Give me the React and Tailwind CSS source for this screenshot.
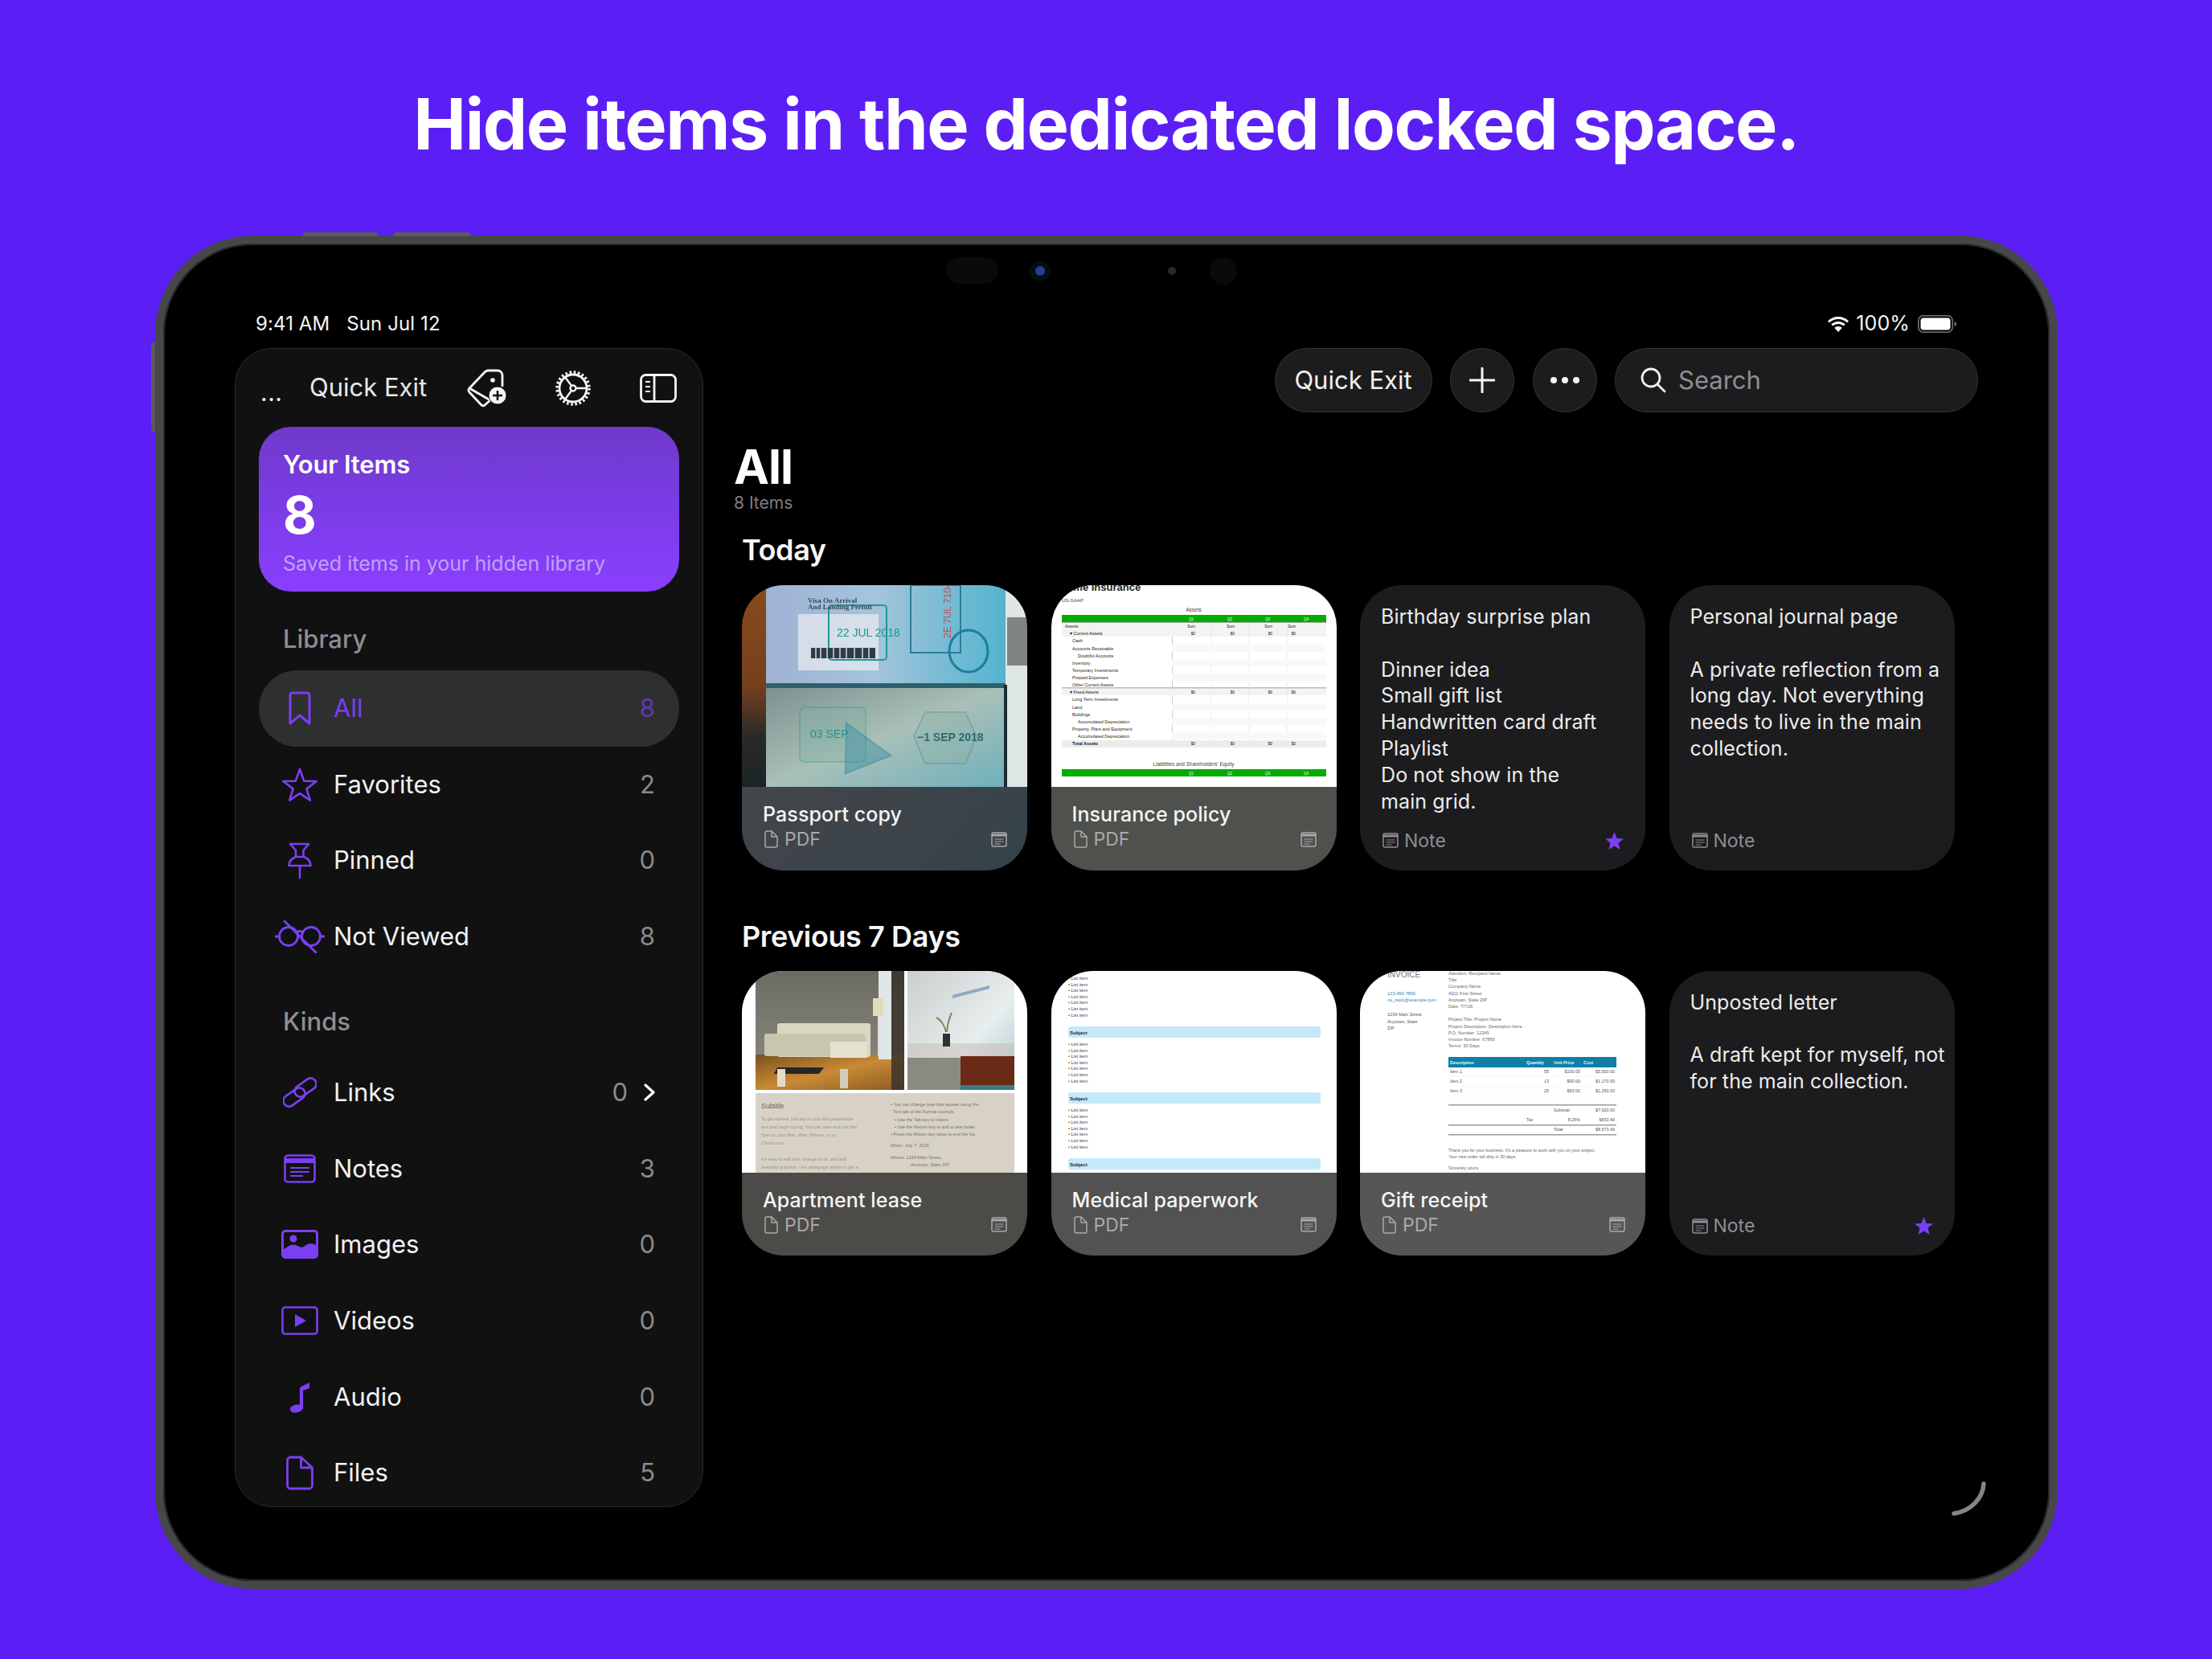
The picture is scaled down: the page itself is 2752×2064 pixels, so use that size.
import React from "react";

const PURPLE = "#7b3ff2";

const I = {
  bookmark: (
    <svg width="28" height="43" viewBox="0 0 28 43" fill="none" stroke={PURPLE} strokeWidth="3" strokeLinejoin="round">
      <path d="M2 5a3 3 0 0 1 3-3h18a3 3 0 0 1 3 3v35l-12-10L2 40Z" />
    </svg>
  ),
  star: (
    <svg width="44" height="42" viewBox="0 0 44 42" fill="none" stroke={PURPLE} strokeWidth="2.6" strokeLinejoin="round">
      <path d="M22 2l5.2 14.6L42.6 17 30.4 26.4 34.8 40.6 22 32.2 9.2 40.6l4.4-14.2L1.4 17l15.4-.4Z" />
    </svg>
  ),
  pin: (
    <svg width="30" height="46" viewBox="0 0 30 46" fill="none" stroke={PURPLE} strokeWidth="2.6" strokeLinecap="round" strokeLinejoin="round">
      <path d="M3 2h23l-6.5 8v8H10v-8Z" />
      <path d="M10 18C5 20 1.5 24 1.5 29h27C28.500 24 25 20 20 18" />
      <path d="M15 29v15" />
    </svg>
  ),
  notViewed: (
    <svg width="62" height="41" viewBox="0 0 62 41" fill="none" stroke={PURPLE} strokeWidth="2.8" strokeLinecap="round">
      <circle cx="17" cy="20" r="11.500" />
      <circle cx="45" cy="20" r="11.500" />
      <path d="M1 20h5M56 20h5M12 1l39 39" />
      <path d="M27 15c2-2 6-2 8 0" />
    </svg>
  ),
  link: (
    <svg width="42" height="42" viewBox="0 0 42 42" fill="none" stroke={PURPLE} strokeWidth="2.6">
      <rect x="-15" y="-7" width="30" height="14" rx="7" transform="translate(14 27) rotate(-35)" />
      <rect x="-15" y="-7" width="30" height="14" rx="7" transform="translate(28 15) rotate(-35)" />
    </svg>
  ),
  notes: (
    <svg width="40" height="36" viewBox="0 0 40 36" fill="none" stroke={PURPLE} strokeWidth="2.6">
      <rect x="1.500" y="1.500" width="37" height="33" rx="4" />
      <path d="M2 8h36" strokeWidth="6" />
      <path d="M8 17h24M8 22h24M8 27h16" strokeWidth="2" />
    </svg>
  ),
  images: (
    <svg width="46" height="36" viewBox="0 0 46 36" fill="none">
      <rect x="1.500" y="1.500" width="43" height="33" rx="3.500" stroke={PURPLE} strokeWidth="3" />
      <circle cx="15" cy="11" r="4.500" fill={PURPLE} />
      <path d="M2 33v-8c6-4 10-8 16-6 5 2 7 4 10 2 5-4 10-6 16-1v13Z" fill={PURPLE} />
    </svg>
  ),
  videos: (
    <svg width="46" height="36" viewBox="0 0 46 36" fill="none">
      <rect x="1.500" y="1.500" width="43" height="33" rx="3.500" stroke={PURPLE} strokeWidth="2.600" />
      <path d="M17 10l14 8-14 8Z" fill={PURPLE} />
    </svg>
  ),
  audio: (
    <svg width="25" height="40" viewBox="0 0 25 40" fill="none">
      <path d="M13 7.500 24 2v7l-8 3v21c0 4-5 6.500-10 6.500C2 39.500 0 37.500 0 35c0-3.500 5-5.500 10-5.500l2 .3V9Z" fill={PURPLE} />
    </svg>
  ),
  file: (
    <svg width="34" height="43" viewBox="0 0 34 43" fill="none" stroke={PURPLE} strokeWidth="2.800" strokeLinejoin="round">
      <path d="M1.500 6a4 4 0 0 1 4-4h13L32.500 15v22a4 4 0 0 1-4 4h-23a4 4 0 0 1-4-4Z" />
      <path d="M18.500 2v13h14" />
    </svg>
  ),
};

const PdfGlyph = () => (
  <svg width="17" height="22" viewBox="0 0 17 22" fill="none" stroke="#a9a9a9" strokeWidth="1.500" strokeLinejoin="round">
    <path d="M1 3a2 2 0 0 1 2-2h6l7 7v11a2 2 0 0 1-2 2H3a2 2 0 0 1-2-2Z" />
    <path d="M9 1v7h7" />
  </svg>
);

const NoteGlyph = ({ c = "#a9a9a9" }) => (
  <svg width="20" height="19" viewBox="0 0 20 19" fill="none" stroke={c} strokeWidth="1.500">
    <rect x="1" y="1" width="18" height="17" rx="2" />
    <path d="M1 4h18" strokeWidth="3" />
    <path d="M4.500 9h11M4.500 12h11M4.500 15h7" strokeWidth="1.200" />
  </svg>
);

const Star = () => (
  <svg width="23" height="22" viewBox="0 0 23 22" fill={PURPLE}>
    <path d="M11.500 0l3.100 7.900 8.400.5-6.500 5.300 2.100 8.300-7.100-4.600L4.400 22l2.100-8.300L0 8.400l8.400-.5Z" />
  </svg>
);

/* thumbnails */
const Passport = () => (
  <svg className="block w-full h-full" viewBox="0 0 355 251" preserveAspectRatio="none" fontFamily="Liberation Serif, serif">
    <defs>
      <linearGradient id="wood" x1="0" y1="0" x2="0" y2="1">
        <stop offset="0" stopColor="#8a4a1e" />
        <stop offset=".5" stopColor="#74401e" />
        <stop offset=".75" stopColor="#2a2a28" />
        <stop offset="1" stopColor="#1c2426" />
      </linearGradient>
      <linearGradient id="up" x1="0" y1="0" x2="1" y2="0">
        <stop offset="0" stopColor="#9fb2d4" />
        <stop offset=".45" stopColor="#a4c4dc" />
        <stop offset="1" stopColor="#52b4cd" />
      </linearGradient>
      <linearGradient id="low" x1="0" y1="0" x2="1" y2="1">
        <stop offset="0" stopColor="#7a908e" />
        <stop offset=".5" stopColor="#a9c0b8" />
        <stop offset="1" stopColor="#6fb0bc" />
      </linearGradient>
      <filter id="bl"><feGaussianBlur stdDeviation=".6" /></filter>
    </defs>
    <g filter="url(#bl)">
      <rect width="355" height="251" fill="#1b2a30" />
      <rect width="32" height="251" fill="url(#wood)" />
      <rect x="30" width="300" height="126" fill="url(#up)" />
      <rect x="30" y="124" width="298" height="127" fill="url(#low)" />
      <rect x="328" width="27" height="251" fill="#dfe6e6" />
      <rect x="330" y="40" width="25" height="60" fill="#333" opacity=".55" />
      <rect x="30" y="122" width="298" height="6" fill="#2f5e6c" />
      <rect x="326" y="124" width="4" height="127" fill="#1e2b30" />
      <rect x="70" y="36" width="100" height="70" fill="#e4e6ee" opacity=".8" />
      <rect x="108" y="25" width="72" height="68" rx="4" fill="none" stroke="#1d9a90" strokeWidth="2" />
      <text x="82" y="22" fontSize="9" fill="#3a4a58" fontWeight="700">Visa On Arrival</text>
      <text x="82" y="30" fontSize="9" fill="#3a4a58" fontWeight="700">And Landing Permit</text>
      <text x="118" y="64" fontSize="14" fill="#149a8c" fontFamily="Liberation Sans, sans-serif">22 JUL 2018</text>
      <rect x="86" y="78" width="80" height="13" fill="#2f3c44" />
      <path d="M92 78v13M98 78v13M106 78v13M114 78v13M122 78v13M130 78v13M140 78v13M150 78v13M158 78v13" stroke="#cfd8e0" strokeWidth="1.500" />
      <rect x="210" y="0" width="62" height="84" fill="none" stroke="#2a7c9c" strokeWidth="2" />
      <text x="214" y="60" fontSize="12" fill="#c84a52" transform="rotate(-90 240 40)" fontFamily="Liberation Sans, sans-serif">2E 7UL 7104</text>
      <ellipse cx="282" cy="82" rx="24" ry="26" fill="none" stroke="#1a7ea0" strokeWidth="3" />
      <rect x="72" y="152" width="82" height="68" rx="6" fill="#7fb2a4" opacity=".35" stroke="#2d9a90" strokeWidth="2" />
      <text x="85" y="190" fontSize="14" fill="#22948a" fontFamily="Liberation Sans, sans-serif">03 SEP</text>
      <path d="M130 172l55 40-56 22Z" fill="#3b8ea4" opacity=".45" stroke="#1e7f9a" strokeWidth="2.500" />
      <path d="M228 158h50l14 30-14 34h-50l-14-34Z" fill="#8fb3a8" opacity=".4" stroke="#4d7a7c" strokeWidth="1.500" />
      <text x="218" y="194" fontSize="14" fill="#2f6870" fontFamily="Liberation Sans, sans-serif" fontWeight="700">−1 SEP 2018</text>
    </g>
  </svg>
);

const Insurance = () => {
  const rows = [
    [69, "Cash", 26], [79, "Accounts Receivable", 26], [88, "Doubtful Accounts", 33], [97, "Inventory", 26],
    [106, "Temporary Investments", 26], [115, "Prepaid Expenses", 26], [124, "Other Current Assets", 26],
    [142, "Long Term Investments", 26], [152, "Land", 26], [161, "Buildings", 26], [170, "Accumulated Depreciation", 33],
    [179, "Property, Plant and Equipment", 26], [188, "Accumulated Depreciation", 33],
  ];
  const cols = [160, 209, 256, 303, 340];
  return (
    <svg className="block w-full h-full" viewBox="0 0 355 251" preserveAspectRatio="none" fontFamily="Liberation Sans, sans-serif">
      <rect width="355" height="251" fill="#fff" />
      <text x="10" y="7" fontSize="13" fontWeight="700" fill="#222">Home Insurance</text>
      <text x="13" y="21" fontSize="6" fill="#444">US-GAAP</text>
      <text x="177" y="33" fontSize="6.500" fill="#444" textAnchor="middle">Assets</text>
      <rect x="13" y="37" width="329" height="9" fill="#00ad00" />
      <rect x="13" y="46" width="329" height="1" fill="#aaa" />
      <rect x="13" y="47" width="329" height="17" fill="#f3f3f3" />
      <text x="17" y="53" fontSize="5.500" fill="#222">Assets</text>
      <text x="23" y="62" fontSize="5.500" fill="#111">▾ Current Assets</text>
      <rect x="13" y="128" width="329" height="9" fill="#f3f3f3" />
      <rect x="13" y="127" width="329" height="1.500" fill="#bbb" />
      <text x="23" y="135" fontSize="5.500" fill="#111">▾ Fixed Assets</text>
      <rect x="13" y="193" width="329" height="9" fill="#ececec" />
      <text x="26" y="199" fontSize="5.500" fontWeight="700" fill="#111">Total Assets</text>
      {rows.map(([y, t, x]) => (
        <text key={y} x={x} y={y + 2} fontSize="5.500" fill="#222">{t}</text>
      ))}
      {[64, 137].map((y0) => (
        <rect key={y0} x="150" y={y0} width="1" height={y0 === 64 ? 63 : 56} fill="#ccc" />
      ))}
      {[198, 245, 293].map((x) => <rect key={x} x={x} y="47" width=".6" height="155" fill="#e6e6e6" />)}
      {[74, 92, 110, 147, 165, 183].map((y) => <rect key={y} x="150" y={y} width="192" height="9" fill="#f8f8f8" />)}
      {[53, 62, 135, 199].map((y) =>
        cols.slice(0, 4).map((x, i) => (
          <text key={y + "" + i} x={x + 19 + (i === 3 ? -18 : 0)} y={y} fontSize="4.800" fill="#111" textAnchor="end">{y === 53 ? "Sum" : "$0"}</text>
        ))
      )}
      <text x="177" y="225" fontSize="6.500" fill="#444" textAnchor="middle">Liabilities and Shareholders' Equity</text>
      <rect x="13" y="229" width="329" height="9" fill="#00ad00" />
      {[["Q1", 174], ["Q2", 222], ["Q3", 269], ["Q4", 317]].map(([q, x]) => (
        <g key={q}>
          <text x={x} y="44" fontSize="4.500" fill="#fff" textAnchor="middle">{q}</text>
          <text x={x} y="236" fontSize="4.500" fill="#fff" textAnchor="middle">{q}</text>
        </g>
      ))}
    </svg>
  );
};

const Apartment = () => {
  const L = [
    "To get started, just tap or click this placeholder", "text and begin typing. You can view and edit this",
    "flyer on your Mac, iPad, iPhone, or on", "iCloud.com.", "", "It's easy to edit text, change fonts, and add",
    "beautiful graphics. Use paragraph styles to get a", "consistent look throughout your document. For",
  ];
  const R = [
    "• You can change how lists appear using the", "  Text tab of the Format controls.", "   • Use the Tab key to indent.",
    "   • Use the Return key to add a new bullet.", "• Press the Return key twice to end the list.",
  ];
  return (
    <svg className="block w-full h-full" viewBox="0 0 355 251" preserveAspectRatio="none" fontFamily="Liberation Sans, sans-serif">
      <defs>
        <linearGradient id="wall" x1="0" y1="0" x2="0" y2="1"><stop offset="0" stopColor="#6b6b63" /><stop offset="1" stopColor="#8f8d83" /></linearGradient>
        <linearGradient id="floor" x1="0" y1="0" x2="1" y2="1"><stop offset="0" stopColor="#7a5020" /><stop offset=".5" stopColor="#c88a34" /><stop offset="1" stopColor="#8a5a24" /></linearGradient>
        <linearGradient id="bath" x1="0" y1="0" x2="1" y2="1"><stop offset="0" stopColor="#c8cfcc" /><stop offset=".6" stopColor="#e8eeee" /><stop offset="1" stopColor="#a8c8d0" /></linearGradient>
        <filter id="b2"><feGaussianBlur stdDeviation=".5" /></filter>
      </defs>
      <rect width="355" height="251" fill="#fff" />
      <g filter="url(#b2)">
        <rect x="17" width="185" height="148" fill="url(#wall)" />
        <rect x="17" y="104" width="185" height="44" fill="url(#floor)" />
        <rect x="170" width="16" height="110" fill="#dfe6e6" />
        <rect x="186" width="16" height="148" fill="#39322a" opacity=".85" />
        <rect x="44" y="65" width="116" height="42" rx="3" fill="#d9d6c2" />
        <rect x="28" y="78" width="126" height="28" rx="3" fill="#c9c6b0" />
        <rect x="110" y="88" width="46" height="20" fill="#e6e2d0" />
        <path d="M44 120h58l-6 8H40Z" fill="#26282a" />
        <rect x="44" y="122" width="10" height="22" fill="#e2dcc8" />
        <rect x="122" y="122" width="10" height="24" fill="#d2ccba" />
        <rect x="163" y="34" width="13" height="22" fill="#e2dcbc" />
        <rect x="169" y="56" width="1.500" height="50" fill="#ddd" />
        <rect x="206" width="133" height="148" fill="url(#bath)" />
        <rect x="206" y="90" width="133" height="58" fill="#c9bdb8" opacity=".55" />
        <rect x="206" y="108" width="66" height="40" fill="#8b8a82" />
        <rect x="272" y="106" width="67" height="36" fill="#6a2c14" />
        <rect x="272" y="142" width="67" height="6" fill="#3a7a84" />
        <path d="M262 30l46-12v4l-46 12Z" fill="#8ea8c4" />
        <rect x="250" y="78" width="9" height="16" fill="#333" />
        <path d="M254 76c-2-10-8-16-12-18M255 76c1-12 3-18 6-24" stroke="#7a8a5a" strokeWidth="2" fill="none" />
      </g>
      <rect x="17" y="152" width="322" height="99" fill="#d8d2c6" />
      <text x="24" y="171" fontSize="8.500" fill="#6a665c">Subtitle</text>
      {L.map((t, i) => (
        <text key={i} x="24" y={186 + i * 10} fontSize="5.600" fill="#9a958a">{t}</text>
      ))}
      {R.map((t, i) => (
        <text key={i} x="185" y={168 + i * 9.300} fontSize="5.600" fill="#77736a" xmlSpace="preserve">{t}</text>
      ))}
      <text x="185" y="219" fontSize="5.600" fill="#77736a">When:   July 7, 2026</text>
      <text x="185" y="234" fontSize="5.600" fill="#77736a">Where:  1234 Main Street,</text>
      <text x="210" y="243" fontSize="5.600" fill="#77736a">Anytown, State ZIP</text>
    </svg>
  );
};

const Medical = () => {
  const groups = [9, 91, 173];
  const bars = [69, 151, 233];
  return (
    <svg className="block w-full h-full" viewBox="0 0 355 251" preserveAspectRatio="none" fontFamily="Liberation Sans, sans-serif">
      <rect width="355" height="251" fill="#fff" />
      {groups.map((g) =>
        [0, 1, 2, 3, 4, 5, 6].map((i) => (
          <text key={g + "-" + i} x="21" y={g + i * 7.600 + 2} fontSize="5.600" fill="#444">• List item</text>
        ))
      )}
      {bars.map((y) => (
        <g key={y}>
          <rect x="21" y={y} width="314" height="14" rx="3" fill="#c5e9fb" />
          <text x="23" y={y + 9.500} fontSize="6" fontWeight="700" fill="#222">Subject</text>
        </g>
      ))}
    </svg>
  );
};

const Gift = () => {
  const left = [["123-456-7890", 28, "#2a85b0"], ["no_reply@example.com", 36, "#2a85b0"], ["1234 Main Street", 54, "#555"], ["Anytown, State", 63, "#555"], ["ZIP", 71, "#555"]];
  const mid = ["Attention: Recipient Name", "Title", "Company Name", "4321 First Street", "Anytown, State ZIP", "Date: 7/7/26", "", "Project Title: Project Name", "Project Description: Description Here", "P.O. Number: 12345", "Invoice Number: 67890", "Terms: 30 Days"];
  const rows = [["Item 1", "55", "$100.00", "$5,500.00", 127], ["Item 2", "13", "$90.00", "$1,170.00", 139], ["Item 3", "25", "$50.00", "$1,250.00", 151]];
  return (
    <svg className="block w-full h-full" viewBox="0 0 355 251" preserveAspectRatio="none" fontFamily="Liberation Sans, sans-serif">
      <rect width="355" height="251" fill="#fff" />
      <text x="34" y="8" fontSize="10" fill="#777">INVOICE</text>
      {left.map(([t, y, c]) => <text key={t} x="34" y={y + 2} fontSize="5.600" fill={c}>{t}</text>)}
      {mid.map((t, i) => <text key={i} x="110" y={5 + i * 8.200} fontSize="5.600" fill="#666">{t}</text>)}
      <rect x="110" y="107" width="209" height="13" fill="#0f7fa8" />
      {[["Description", 112], ["Quantity", 207], ["Unit Price", 241], ["Cost", 278]].map(([t, x]) => (
        <text key={t} x={x} y="116" fontSize="5.400" fontWeight="700" fill="#dff">{t}</text>
      ))}
      {rows.map(([a, b, c, d, y]) => (
        <g key={a} fontSize="5.400" fill="#555">
          <text x="112" y={y}>{a}</text>
          <text x="235" y={y} textAnchor="end">{b}</text>
          <text x="274" y={y} textAnchor="end">{c}</text>
          <text x="317" y={y} textAnchor="end">{d}</text>
          <rect x="110" y={y + 4} width="209" height=".5" fill="#eee" />
        </g>
      ))}
      {[166, 191, 203].map((y) => <rect key={y} x="110" y={y} width="209" height="1.500" fill="#999" />)}
      <text x="241" y="175" fontSize="5.400" fill="#555">Subtotal</text>
      <text x="317" y="175" fontSize="5.400" fill="#555" textAnchor="end">$7,920.00</text>
      <text x="207" y="187" fontSize="5.400" fill="#555">Tax</text>
      <text x="274" y="187" fontSize="5.400" fill="#555" textAnchor="end">8.25%</text>
      <text x="317" y="187" fontSize="5.400" fill="#555" textAnchor="end">$653.40</text>
      <text x="241" y="199" fontSize="5.400" fill="#555">Total</text>
      <text x="317" y="199" fontSize="5.400" fill="#555" textAnchor="end">$8,573.40</text>
      <text x="110" y="225" fontSize="5.400" fill="#666">Thank you for your business. It's a pleasure to work with you on your project.</text>
      <text x="110" y="233" fontSize="5.400" fill="#666">Your next order will ship in 30 days.</text>
      <text x="110" y="247" fontSize="5.400" fill="#666">Sincerely yours,</text>
    </svg>
  );
};

const DocCard = ({ title, thumb, footer }) => (
  <div className="h-[354.5px] rounded-[52px] overflow-hidden flex flex-col">
    <div className="h-[251px] shrink-0 overflow-hidden">{thumb}</div>
    <div className="flex-1 pt-[19px] pl-[26px] pr-[25px]" style={{ background: footer }}>
      <div className="text-[25px] leading-[30px] font-medium tracking-[0.1px] text-[#f5f5f5] whitespace-nowrap">{title}</div>
      <div className="flex items-center h-[30px] mt-px">
        <span className="ml-[2px] mr-[8px] flex"><PdfGlyph /></span>
        <span className="text-[23px] text-[#a9a9a9] leading-[30px]">PDF</span>
        <span className="ml-auto flex"><NoteGlyph /></span>
      </div>
    </div>
  </div>
);

const NoteCard = ({ lines, star }) => (
  <div className="h-[354.5px] rounded-[52px] bg-[#1c1c1e] pt-[23px] pb-[22px] pl-[26px] pr-[27px] flex flex-col justify-between">
    <div className="text-[25px] leading-[32.8px] text-[#ececec] tracking-[0.1px]">
      {lines.map((l, i) => <div key={i} className="whitespace-nowrap h-[32.8px]">{l}</div>)}
    </div>
    <div className="flex items-center h-[30px]">
      <span className="ml-[2px] mr-[7px] flex"><NoteGlyph c="#8e8e93" /></span>
      <span className="text-[23px] text-[#8e8e93] leading-[30px]">Note</span>
      {star && <span className="ml-auto flex"><Star /></span>}
    </div>
  </div>
);

const Row = ({ icon, label, count, active, chevron }) => (
  <div className={`h-[94.7px] shrink-0 flex items-center rounded-full pr-[30px] ${active ? "bg-[#2e2f2f]" : ""}`}>
    <span className="w-[102px] -mr-[9px] shrink-0 flex justify-center">{icon}</span>
    <span className={`text-[31px] ${active ? "text-[#7b3ff2]" : "text-[#f2f2f2]"}`}>{label}</span>
    <span className={`ml-auto text-[31px] ${active ? "text-[#6436b8]" : "text-[#8a8a8e]"}`}>{count}</span>
    {chevron && (
      <svg className="ml-[20px]" width="14" height="22" viewBox="0 0 14 22" fill="none" stroke="#fff" strokeWidth="3.200" strokeLinecap="round" strokeLinejoin="round">
        <path d="M2 2l10 9-10 9" />
      </svg>
    )}
  </div>
);

const Sidebar = () => (
  <aside className="w-[583px] h-[1442px] shrink-0 rounded-[46px] border border-[#2b2b2d] overflow-hidden bg-[#111112] flex flex-col">
    <div className="h-[97px] shrink-0 flex items-center pl-[31px]">
      <span className="w-[61px] text-[30px] text-[#eee] leading-none pt-[10px] tracking-[0.5px]">...</span>
      <span className="w-[196px] text-[31px] text-[#e8e8e8] whitespace-nowrap">Quick Exit</span>
      <svg width="50" height="48" viewBox="0 0 50 48" fill="none" stroke="#f4f4f4" strokeWidth="2.800" strokeLinejoin="round" className="mr-[58px]">
        <path d="M3 24 22 4a6 6 0 0 1 4-2h12a6 6 0 0 1 6 6v14M29 39l-7 6a3 3 0 0 1-4 0L3 29a3.500 3.500 0 0 1 0-5Z" />
        <circle cx="32" cy="14" r="2.800" fill="#f4f4f4" stroke="none" />
        <circle cx="38" cy="33" r="11" fill="#f4f4f4" stroke="#111112" strokeWidth="1" />
        <path d="M38 27v12M32 33h12" stroke="#111" strokeWidth="2.600" />
      </svg>
      <svg width="48" height="48" viewBox="0 0 48 48" fill="none" stroke="#f4f4f4" className="mr-[59px]">
        <circle cx="24" cy="24" r="17" strokeWidth="2.800" />
        <circle cx="24" cy="24" r="20" strokeWidth="3.500" strokeDasharray="2.600 2.640" />
        <circle cx="24" cy="24" r="3.500" strokeWidth="2.400" />
        <path d="M27.500 24H41M22 21 13.500 9.500M22 27 13.500 38.500" strokeWidth="2.400" />
      </svg>
      <svg width="46" height="36" viewBox="0 0 46 36" fill="none" stroke="#f4f4f4" strokeWidth="2.800">
        <rect x="1.500" y="1.500" width="43" height="33" rx="6" />
        <path d="M18 2v32" />
        <path d="M7 10h6M7 16h6M7 22h6" strokeWidth="2.200" />
      </svg>
    </div>
    <div className="mx-[29px] flex flex-col">
      <div className="h-[205px] shrink-0 rounded-[40px] bg-gradient-to-b from-[#6f3acb] via-[#7b3ce6] to-[#8a3fff] pl-[30px] pt-[28px]">
        <div className="text-[31px] leading-[38px] font-semibold text-white tracking-[-0.2px]">Your Items</div>
        <div className="text-[64px] leading-[64px] font-bold text-white mt-[12px]">8</div>
        <div className="text-[25px] leading-[30px] text-[#c3a0f7] mt-[13px] whitespace-nowrap">Saved items in your hidden library</div>
      </div>
      <div className="text-[31px] leading-[40px] font-medium text-[#8e8e93] pl-[30px] mt-[39px]">Library</div>
      <div className="mt-[19px] flex flex-col">
        <Row icon={I.bookmark} label="All" count="8" active />
        <Row icon={I.star} label="Favorites" count="2" />
        <Row icon={I.pin} label="Pinned" count="0" />
        <Row icon={I.notViewed} label="Not Viewed" count="8" />
      </div>
      <div className="text-[31px] leading-[40px] font-medium text-[#8e8e93] pl-[30px] mt-[38px]">Kinds</div>
      <div className="mt-[21px] flex flex-col">
        <Row icon={I.link} label="Links" count="0" chevron />
        <Row icon={I.notes} label="Notes" count="3" />
        <Row icon={I.images} label="Images" count="0" />
        <Row icon={I.videos} label="Videos" count="0" />
        <Row icon={I.audio} label="Audio" count="0" />
        <Row icon={I.file} label="Files" count="5" />
      </div>
    </div>
  </aside>
);

const Toolbar = () => (
  <div className="flex justify-end gap-[22.5px] h-[80px]">
    <div className="w-[196px] rounded-full bg-[#1c1c1e] border border-[#333335] flex items-center justify-center text-[31px] text-[#f0f0f0]">Quick Exit</div>
    <div className="w-[80px] rounded-full bg-[#1c1c1e] border border-[#333335] flex items-center justify-center">
      <svg width="32" height="32" viewBox="0 0 32 32" stroke="#f4f4f4" strokeWidth="3" strokeLinecap="round"><path d="M16 1v30M1 16h30" /></svg>
    </div>
    <div className="w-[80px] rounded-full bg-[#1c1c1e] border border-[#333335] flex items-center justify-center gap-[6px]">
      <span className="w-[8px] h-[8px] rounded-full bg-[#f4f4f4]" />
      <span className="w-[8px] h-[8px] rounded-full bg-[#f4f4f4]" />
      <span className="w-[8px] h-[8px] rounded-full bg-[#f4f4f4]" />
    </div>
    <div className="w-[452px] rounded-full bg-[#1c1c1e] border border-[#333335] flex items-center pl-[31px]">
      <svg width="32" height="32" viewBox="0 0 32 32" fill="none" stroke="#f0f0f0" strokeWidth="2.800" strokeLinecap="round"><circle cx="13" cy="13" r="11" /><path d="M21 21l9 9" /></svg>
      <span className="ml-[15px] text-[31px] text-[#8e8e93]">Search</span>
    </div>
  </div>
);

const SectionTitle = ({ children, className = "" }) => (
  <div className={`pl-[10px] text-[36px] leading-[44px] font-semibold text-[#f7f7f7] tracking-[-0.4px] ${className}`}>{children}</div>
);

const Main = () => (
  <main className="flex-1 min-w-0">
    <Toolbar />
    <div className="pl-[38px]">
      <div className="mt-[38px] text-[59px] leading-[60px] font-bold text-white tracking-[-1px]">All</div>
      <div className="mt-[2px] text-[21px] leading-[26px] text-[#7d7d80]">8 Items</div>
      <SectionTitle className="mt-[23px]">Today</SectionTitle>
      <div className="ml-[10px] mt-[22px] grid grid-cols-[repeat(4,355px)] gap-x-[29.5px]">
        <DocCard title="Passport copy" thumb={<Passport />} footer="linear-gradient(135deg,#43464a,#35424a)" />
        <DocCard title="Insurance policy" thumb={<Insurance />} footer="#4f514d" />
        <NoteCard star lines={["Birthday surprise plan", "", "Dinner idea", "Small gift list", "Handwritten card draft", "Playlist", "Do not show in the", "main grid."]} />
        <NoteCard lines={["Personal journal page", "", "A private reflection from a", "long day. Not everything", "needs to live in the main", "collection."]} />
      </div>
      <SectionTitle className="mt-[60px]">Previous 7 Days</SectionTitle>
      <div className="ml-[10px] mt-[21px] grid grid-cols-[repeat(4,355px)] gap-x-[29.5px]">
        <DocCard title="Apartment lease" thumb={<Apartment />} footer="#4c4b48" />
        <DocCard title="Medical paperwork" thumb={<Medical />} footer="#525252" />
        <DocCard title="Gift receipt" thumb={<Gift />} footer="#565656" />
        <NoteCard star lines={["Unposted letter", "", "A draft kept for myself, not", "for the main collection."]} />
      </div>
    </div>
  </main>
);

const Hardware = () => (
  <>
    <span className="absolute -top-[14px] left-[174px] w-[93px] h-[5px] rounded-t-[3px] bg-[#5b5b5e]" />
    <span className="absolute -top-[14px] left-[287px] w-[95px] h-[5px] rounded-t-[3px] bg-[#5b5b5e]" />
    <span className="absolute -left-[15px] top-[123px] w-[5px] h-[111px] rounded-l-[3px] bg-[#58585b]" />
    <span className="absolute left-[974px] top-[17px] w-[65px] h-[33px] rounded-full bg-[#0a0a0a]" />
    <span className="absolute left-[1078px] top-[21px] w-[26px] h-[26px] rounded-full bg-[#0a0a16] flex items-center justify-center">
      <span className="w-[12px] h-[12px] rounded-full bg-[#23408a]" />
    </span>
    <span className="absolute left-[1250px] top-[29px] w-[10px] h-[10px] rounded-full bg-[#2a2a2a]" />
    <span className="absolute left-[1302px] top-[17px] w-[34px] h-[34px] rounded-full bg-[#0a0a0a]" />
    <svg className="absolute left-[2225px] top-[1540px]" width="44" height="44" viewBox="0 0 44 44" fill="none" stroke="#858585" strokeWidth="5.500" strokeLinecap="round">
      <path d="M40 3C39 21 24 37 3 40" />
    </svg>
  </>
);

const Device = () => (
  <div className="relative ml-[193px] w-[2367px] h-[1684px] rounded-[122px] bg-black border-[10px] border-[#47474a] shadow-[inset_0_0_0_2px_#2a2a2c] pt-[83px] px-[89px]">
    <Hardware />
    <div className="h-[34px] flex items-center text-[24px] text-[#f5f5f5] mb-[13px] -mx-[3px] pl-[32px] pr-[30px] tracking-[0.1px]">
      <span className="-ml-[3px]">9:41 AM</span>
      <span className="ml-[21px]">Sun Jul 12</span>
      <span className="ml-auto flex items-center">
        <svg width="26" height="19" viewBox="0 0 26 19" fill="#f5f5f5">
          <path d="M13 0C8 0 3.500 2 0 5.400l2 2.100C5 4.600 8.800 3 13 3s8 1.600 11 4.500l2-2.100C22.500 2 18 0 13 0Z" />
          <path d="M13 6c-3.400 0-6.400 1.300-8.700 3.500l2 2.100C8 10 10.400 9 13 9s5 1 6.700 2.600l2-2.100C19.400 7.300 16.400 6 13 6Z" />
          <path d="M13 12c-1.900 0-3.500.7-4.700 1.900L13 19l4.700-5.100C16.500 12.700 14.900 12 13 12Z" />
        </svg>
        <span className="ml-[9px] text-[25px]">100%</span>
        <svg className="ml-[10px]" width="48" height="22" viewBox="0 0 48 22" fill="none">
          <rect x=".8" y=".8" width="42.400" height="20.400" rx="6" stroke="#777" strokeWidth="1.500" />
          <rect x="3.500" y="3.500" width="37" height="15" rx="3.500" fill="#fff" />
          <path d="M45.500 8v6c1.500-.5 2.500-1.700 2.500-3s-1-2.500-2.500-3Z" fill="#777" />
        </svg>
      </span>
    </div>
    <div className="flex">
      <Sidebar />
      <Main />
    </div>
  </div>
);

export default function App() {
  return (
    <div className="w-[2752px] h-[2064px] overflow-hidden bg-[#5b1ff5] font-['Inter',sans-serif]">
      <div className="h-[293px] pt-[97px] text-center text-[88px] leading-[114px] font-bold tracking-[-1.5px] text-white whitespace-nowrap">
        Hide items in the dedicated locked space.
      </div>
      <Device />
    </div>
  );
}
